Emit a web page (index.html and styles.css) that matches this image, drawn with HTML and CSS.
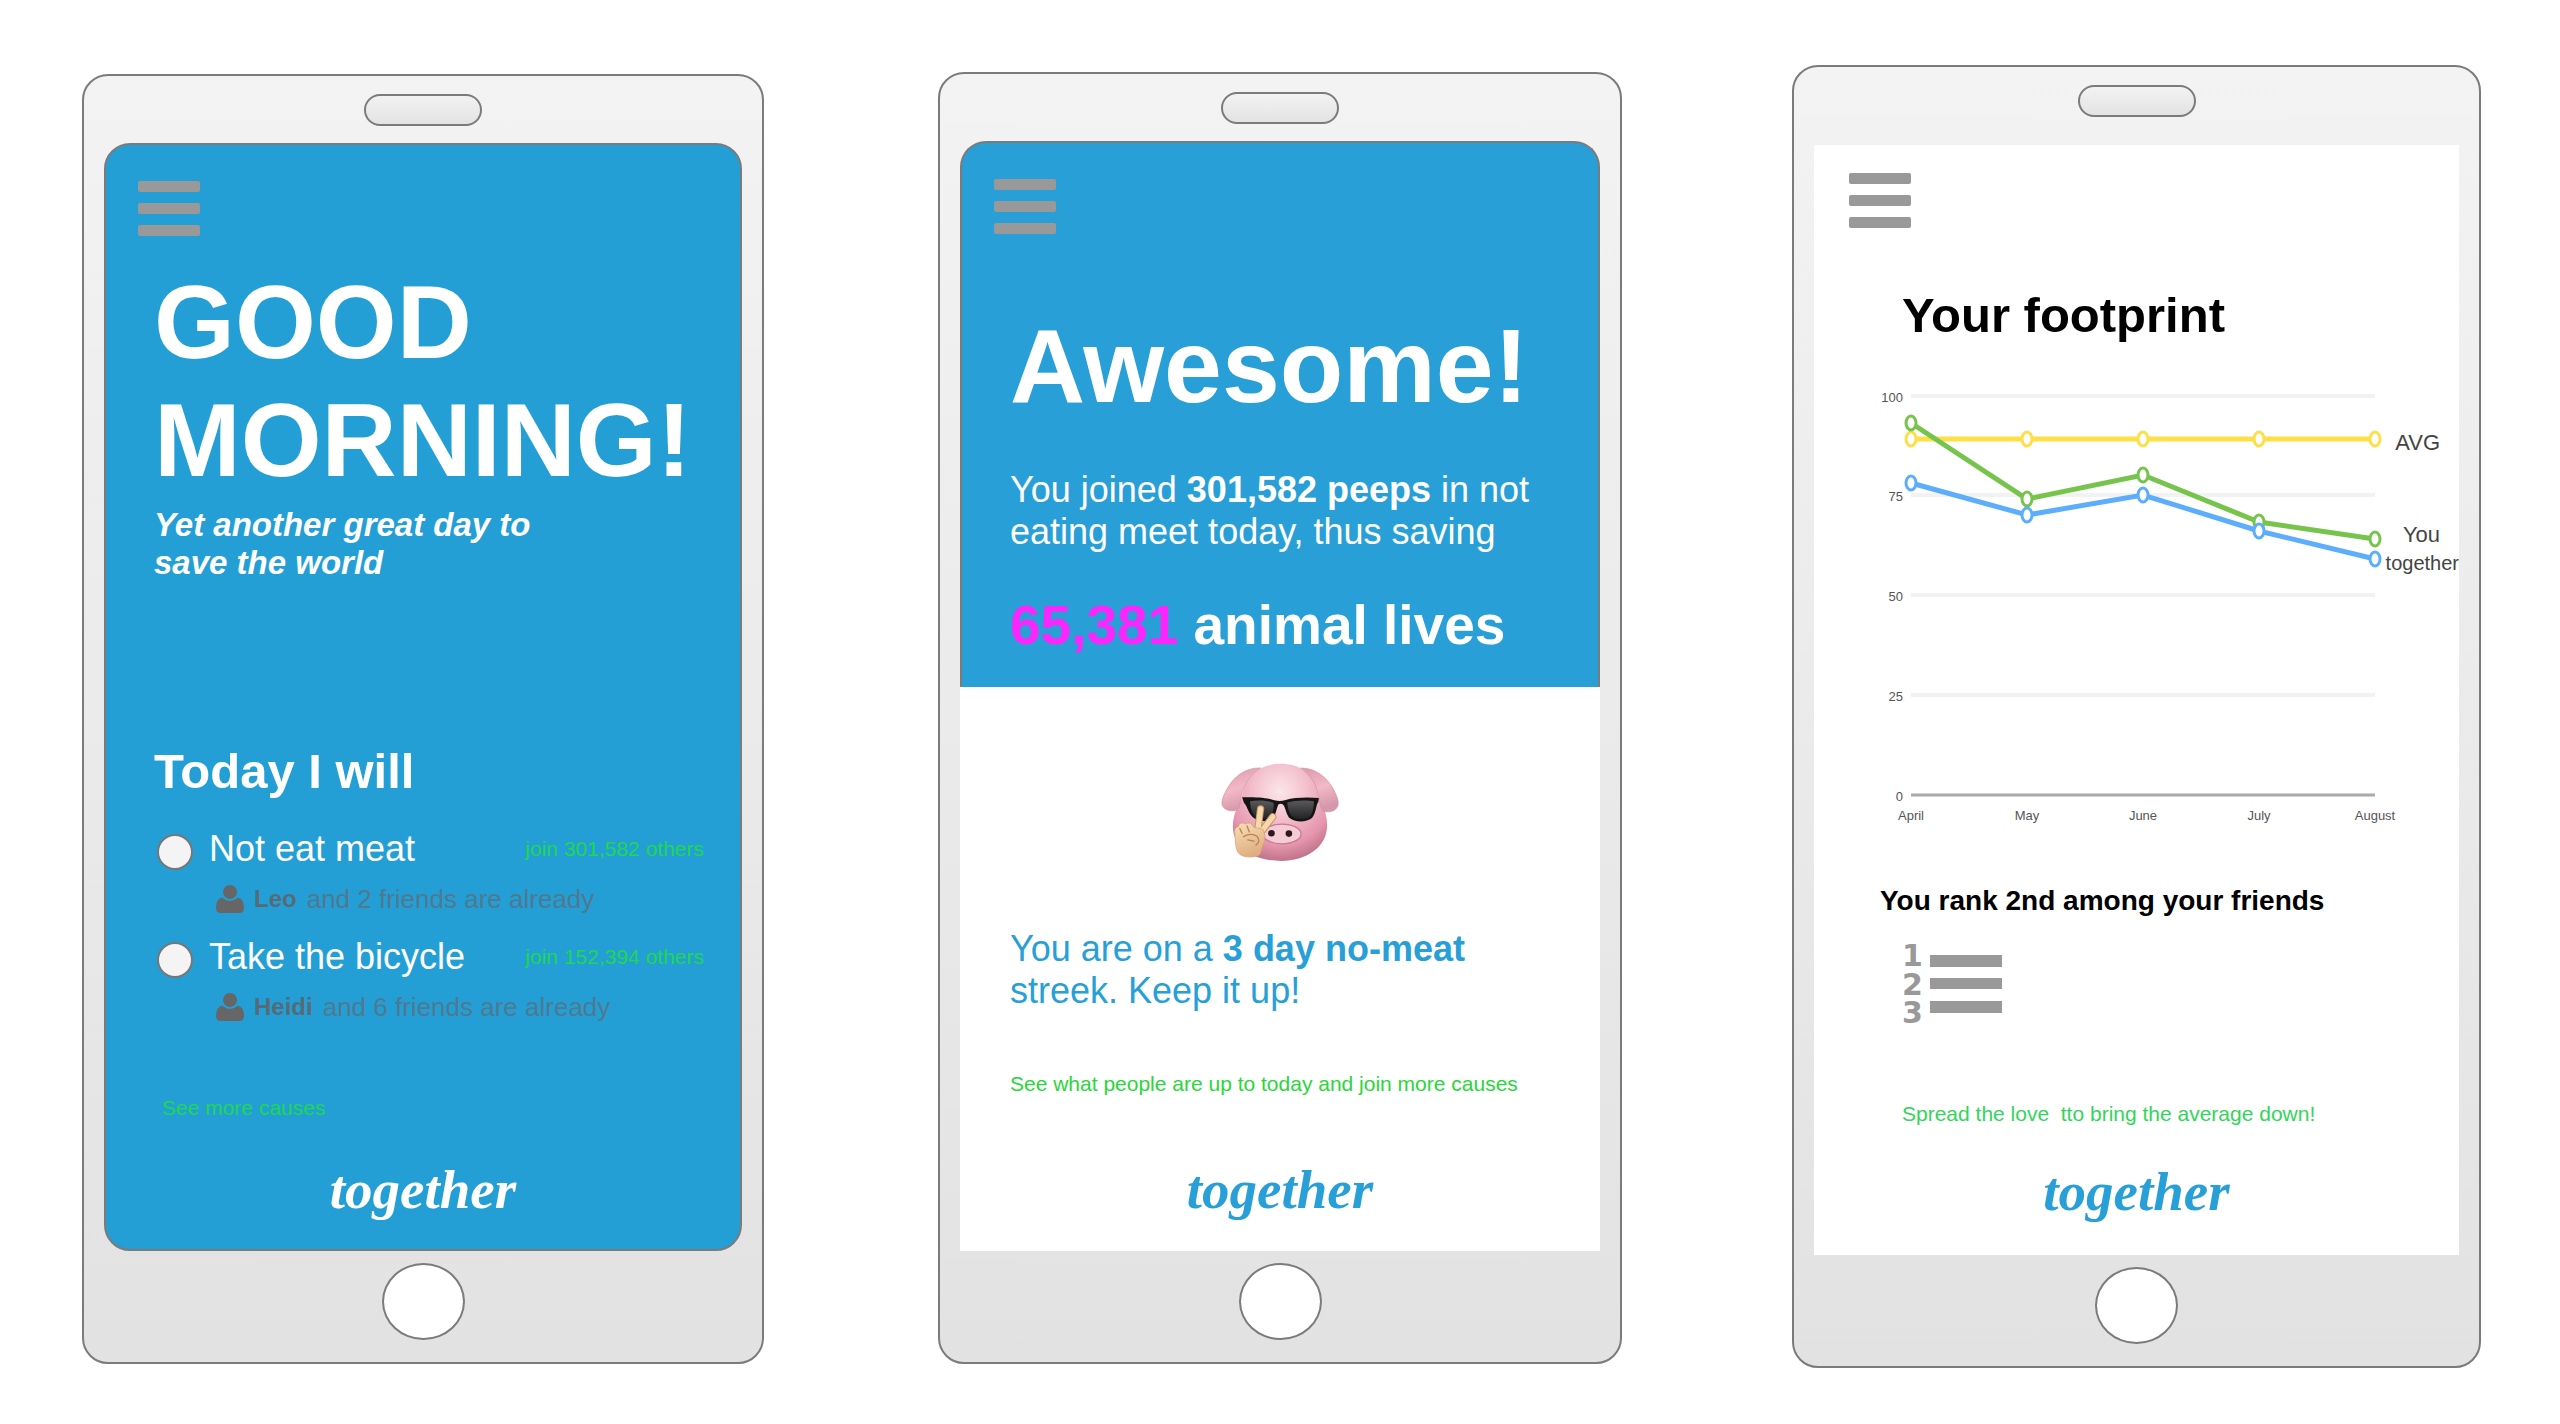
FILE: index.html
```html
<!DOCTYPE html>
<html lang="en">
<head>
<meta charset="utf-8">
<meta name="viewport" content="width=device-width, initial-scale=1">
<title>together</title>
<link rel="stylesheet" href="styles.css">
</head>
<body>
<main class="board">

  <section class="phone phone-morning">
    <div class="speaker"></div>
    <div class="screen screen-blue">
      <button class="menu" type="button" aria-label="Menu"><span></span><span></span><span></span></button>
      <h1 class="hero">GOOD MORNING!</h1>
      <p class="tagline">Yet another great day to save the world</p>
      <h2 class="title">Today I will</h2>
      <ul class="causes">
        <li>
          <div class="cause">
            <input class="radio" type="radio" name="cause" id="meat">
            <label for="meat">Not eat meat</label>
            <a class="link" href="#meat">join 301,582 others</a>
          </div>
          <p class="friends">
            <svg class="person" viewBox="0 0 28 28" aria-hidden="true"><circle cx="14" cy="7" r="7"/><path d="M6 12.500Q10 16 14 16T22 12.500Q28 14 28 23Q28 28 23 28H5Q0 28 0 23Q0 14 6 12.500Z"/></svg>
            <strong>Leo</strong><span>and 2 friends are already</span>
          </p>
        </li>
        <li>
          <div class="cause">
            <input class="radio" type="radio" name="cause" id="bicycle">
            <label for="bicycle">Take the bicycle</label>
            <a class="link" href="#bicycle">join 152,394 others</a>
          </div>
          <p class="friends">
            <svg class="person" viewBox="0 0 28 28" aria-hidden="true"><circle cx="14" cy="7" r="7"/><path d="M6 12.500Q10 16 14 16T22 12.500Q28 14 28 23Q28 28 23 28H5Q0 28 0 23Q0 14 6 12.500Z"/></svg>
            <strong>Heidi</strong><span>and 6 friends are already</span>
          </p>
        </li>
      </ul>
      <a class="link more" href="#causes">See more causes</a>
      <p class="logo">together</p>
    </div>
    <button class="home" type="button" aria-label="Home"></button>
  </section>

  <section class="phone phone-awesome">
    <div class="speaker"></div>
    <div class="screen">
      <div class="panel">
        <button class="menu" type="button" aria-label="Menu"><span></span><span></span><span></span></button>
        <h1 class="hero">Awesome!</h1>
        <p class="copy">You joined <strong>301,582 peeps</strong> in not<br>eating meet today, thus saving</p>
        <p class="lives"><span class="count">65,381</span> animal lives</p>
      </div>
      <div class="result">
        <svg class="pig" viewBox="62 70 358 298" role="img" aria-label="Pig with sunglasses">
          <defs>
            <radialGradient id="face" cx="0.5" cy="0.28" r="0.75">
              <stop offset="0" stop-color="#fbe6ea"/><stop offset="0.35" stop-color="#f4c3d0"/><stop offset="0.75" stop-color="#e595ad"/><stop offset="1" stop-color="#b96d86"/>
            </radialGradient>
            <linearGradient id="ear" x1="0" y1="0" x2="0.3" y2="1">
              <stop offset="0" stop-color="#dc98ac"/><stop offset="0.55" stop-color="#f2b9c8"/><stop offset="1" stop-color="#d598aa"/>
            </linearGradient>
            <linearGradient id="lens" x1="0" y1="0" x2="0" y2="1">
              <stop offset="0" stop-color="#59595b"/><stop offset="1" stop-color="#222224"/>
            </linearGradient>
            <linearGradient id="hand" x1="0" y1="0" x2="0.4" y2="1">
              <stop offset="0" stop-color="#f8e0b5"/><stop offset="1" stop-color="#dfae80"/>
            </linearGradient>
          </defs>
          <path fill="url(#face)" d="M242 71C300 71 345 100 356 155C360 185 384 210 384 258C384 325 320 366 244 366C165 366 98 325 98 262C98 215 122 190 128 160C138 105 184 71 242 71Z"/>
          <path fill="url(#ear)" stroke="#d08fa3" stroke-width="2" d="M182 84C135 82 100 112 82 145C70 166 62 184 66 198C74 214 94 216 107 212C123 207 117 190 124 168C132 132 150 105 182 84Z"/>
          <path fill="url(#ear)" stroke="#d08fa3" stroke-width="2" d="M304 84C350 84 382 112 401 145C412 166 420 182 417 198C410 216 392 219 375 216C362 211 364 190 358 166C350 130 332 104 304 84Z"/>
          <path fill="#151516" d="M126 173C165 171 205 174 224 182Q242 186 258 181C285 173 325 172 359 175L357 187C350 196 351 220 338 236C320 250 286 250 268 234C258 220 257 200 249 194Q242 190 236 195C230 208 229 226 218 238C200 250 170 246 157 232C143 216 142 200 132 190Z"/>
          <path fill="url(#lens)" d="M150 185C175 181 205 183 222 190C223 210 218 226 208 234C190 242 170 238 161 226C153 214 151 198 150 185ZM263 189C285 182 320 181 344 185C343 210 339 224 330 233C315 242 290 241 277 230C267 218 264 203 263 189Z"/>
          <ellipse cx="247" cy="284" rx="58" ry="30" fill="#f5cbd6" stroke="#c77991" stroke-width="4"/>
          <circle cx="215" cy="282" r="10" fill="#2b1820"/><circle cx="268" cy="283" r="10" fill="#2b1820"/>
          <path fill="none" stroke="#c79468" stroke-width="22" stroke-linecap="round" d="M174 270L182 208M184 278L219 232"/>
          <path fill="none" stroke="#f6d9ab" stroke-width="16" stroke-linecap="round" d="M174 270L182 208M184 278L219 232"/>
          <path fill="url(#hand)" stroke="#cf9d70" stroke-width="2" d="M104 285C102 270 105 264 115 262C116 251 127 248 137 254C146 246 158 255 162 264L189 270C197 285 197 306 189 318C183 335 185 348 170 352C150 357 126 353 117 344C105 333 106 305 104 285Z"/>
          <path fill="none" stroke="#b98258" stroke-width="4" stroke-linecap="round" d="M119 268L126 282M141 260L148 278M130 292Q154 279 171 291Q184 306 168 318M143 302L162 306"/>
        </svg>
        <p class="copy">You are on a <strong>3 day no-meat</strong><br>streek. Keep it up!</p>
        <a class="link more" href="#people">See what people are up to today and join more causes</a>
        <p class="logo">together</p>
      </div>
    </div>
    <button class="home" type="button" aria-label="Home"></button>
  </section>

  <section class="phone phone-footprint">
    <div class="speaker"></div>
    <div class="screen">
      <button class="menu" type="button" aria-label="Menu"><span></span><span></span><span></span></button>
      <h2 class="title">Your footprint</h2>
      <svg class="chart" viewBox="0 0 645 450" role="img" aria-label="Footprint from April to August">
        <path class="grid" d="M97 16H561M97 115H561M97 215H561M97 315H561"/>
        <path class="axis" d="M97 415H561"/>
        <g class="ticks ticks-y">
          <text x="89" y="22">100</text><text x="89" y="121">75</text><text x="89" y="221">50</text><text x="89" y="321">25</text><text x="89" y="421">0</text>
        </g>
        <g class="ticks ticks-x">
          <text x="97" y="440">April</text><text x="213" y="440">May</text><text x="329" y="440">June</text><text x="445" y="440">July</text><text x="561" y="440">August</text>
        </g>
        <g class="series avg">
          <polyline points="97,59 213,59 329,59 445,59 561,59"/>
          <ellipse cx="97" cy="59" rx="5" ry="7"/><ellipse cx="213" cy="59" rx="5" ry="7"/><ellipse cx="329" cy="59" rx="5" ry="7"/><ellipse cx="445" cy="59" rx="5" ry="7"/><ellipse cx="561" cy="59" rx="5" ry="7"/>
        </g>
        <g class="series you">
          <polyline points="97,43 213,119 329,95 445,142 561,159"/>
          <ellipse cx="97" cy="43" rx="5" ry="7"/><ellipse cx="213" cy="119" rx="5" ry="7"/><ellipse cx="329" cy="95" rx="5" ry="7"/><ellipse cx="445" cy="142" rx="5" ry="7"/><ellipse cx="561" cy="159" rx="5" ry="7"/>
        </g>
        <g class="series all">
          <polyline points="97,103 213,135 329,115 445,151 561,179"/>
          <ellipse cx="97" cy="103" rx="5" ry="7"/><ellipse cx="213" cy="135" rx="5" ry="7"/><ellipse cx="329" cy="115" rx="5" ry="7"/><ellipse cx="445" cy="151" rx="5" ry="7"/><ellipse cx="561" cy="179" rx="5" ry="7"/>
        </g>
        <g class="names">
          <text class="short" x="626" y="70">AVG</text><text class="short" x="626" y="162">You</text><text x="645" y="190">together</text>
        </g>
      </svg>
      <h3 class="rank">You rank 2nd among your friends</h3>
      <svg class="ranking" viewBox="0 0 100 80" aria-hidden="true">
        <text x="0" y="22">1</text><text x="0" y="51">2</text><text x="0" y="79">3</text>
        <path d="M28 11H100V23H28ZM28 34H100V45H28ZM28 57H100V69H28Z"/>
      </svg>
      <a class="link more" href="#share">Spread the love &nbsp;tto bring the average down!</a>
      <p class="logo">together</p>
    </div>
    <button class="home" type="button" aria-label="Home"></button>
  </section>

</main>
</body>
</html>
```
FILE: styles.css
```css
* {
  box-sizing: border-box;
}

body {
  margin: 0;
  background: #fff;
  font-family: "Liberation Sans", Arial, sans-serif;
}

h1, h2, h3, p, ul {
  margin: 0;
  padding: 0;
}

.board {
  display: grid;
  grid-template-columns: 682fr 684fr 689fr;
  column-gap: 172px;
  align-items: start;
  padding: 65px 79px 56px 82px;
}

/* Phone body */
.phone {
  display: flex;
  flex-direction: column;
  padding: 18px 20px 22px;
  border: 2px solid #7b7b7b;
  border-radius: 26px;
  background: linear-gradient(#f3f3f3, #e2e2e2);
}

.phone-morning {
  margin-top: 9px;
}

.phone-awesome {
  margin: 7px -2px 0 2px;
}

.speaker {
  align-self: center;
  width: 118px;
  height: 32px;
  margin-bottom: 17px;
  border: 2px solid #7b7b7b;
  border-radius: 16px;
  background: linear-gradient(#f2f2f2, #e3e3e3);
}

.phone-footprint .speaker {
  margin-bottom: 28px;
}

.home {
  align-self: center;
  width: 83px;
  height: 77px;
  margin-top: 12px;
  padding: 0;
  border: 2px solid #7b7b7b;
  border-radius: 50%;
  background: #fff;
}

/* Screens */
.screen {
  display: flex;
  flex-direction: column;
  background: #fff;
  color: #000;
}

.screen-blue {
  padding: 36px 48px 27px;
  border: 2px solid #7b7b7b;
  border-radius: 26px;
  background: #239fd6;
  color: #fff;
}

.phone-awesome .screen {
  background: none;
}

.panel {
  padding: 36px 48px 30px;
  border: 2px solid #7b7b7b;
  border-bottom: 0;
  border-radius: 26px 26px 0 0;
  background: #289fd7;
  color: #fff;
}

.result {
  display: flex;
  flex-direction: column;
  padding: 76px 50px 29px;
  background: #fff;
  color: #289fd7;
}

.phone-footprint .screen {
  padding: 28px 0 31px;
}

.menu {
  display: flex;
  flex-direction: column;
  gap: 11px;
  width: 62px;
  margin-left: -16px;
  padding: 0;
  border: 0;
  background: none;
}

.menu span {
  width: 100%;
  height: 11px;
  border-radius: 2px;
  background: #999;
}

.phone-footprint .menu {
  margin-left: 35px;
}

/* Text */
.hero {
  margin-top: 27px;
  font-size: 104px;
  line-height: 118px;
}

.panel .hero {
  margin-top: 73px;
}

.tagline {
  max-width: 400px;
  margin-top: 7px;
  font-size: 33px;
  font-weight: bold;
  font-style: italic;
  line-height: 38px;
}

.title {
  margin-top: 161px;
  font-size: 49px;
  line-height: 56px;
}

.phone-footprint .title {
  margin: 59px 0 0 88px;
}

.copy {
  margin-top: 44px;
  font-size: 36px;
  line-height: 42px;
}

.result .copy {
  margin-top: 66px;
}

.lives {
  margin-top: 40px;
  font-size: 55px;
  font-weight: bold;
  line-height: 64px;
}

.count {
  color: #fb26fb;
}

.link {
  color: #1fd84f;
  font-size: 21px;
  line-height: 24px;
  text-decoration: none;
  white-space: nowrap;
}

.more {
  margin-top: 74px;
  margin-left: 8px;
}

.result .more {
  margin-top: 60px;
  margin-left: 0;
  color: #2ad63a;
}

.phone-footprint .more {
  margin-top: 78px;
  margin-left: 88px;
  color: #34d45c;
}

.logo {
  margin-top: 38px;
  font-family: "Brush Script MT", "Liberation Serif", serif;
  font-size: 55px;
  font-style: italic;
  font-weight: bold;
  line-height: 64px;
  text-align: center;
}

.result .logo {
  margin-top: 62px;
}

.phone-footprint .logo {
  margin-top: 34px;
  color: #289fd7;
}

/* Causes */
.causes {
  display: flex;
  flex-direction: column;
  gap: 22px;
  margin-top: 29px;
  margin-right: -12px;
  list-style: none;
}

.cause {
  display: flex;
  align-items: center;
  gap: 16px;
  font-size: 36px;
  line-height: 42px;
}

.cause .link {
  margin-left: auto;
}

.radio {
  align-self: flex-end;
  appearance: none;
  width: 36px;
  height: 36px;
  margin: 0 0 0 3px;
  border: 2px solid #777;
  border-radius: 50%;
  background: #f4f4f4;
}

.radio:checked {
  background: #666;
}

.friends {
  display: flex;
  align-items: center;
  gap: 10px;
  margin-top: 14px;
  margin-left: 62px;
  color: #50798f;
  font-size: 26px;
  line-height: 30px;
}

.friends strong {
  color: #566b78;
  font-size: 24px;
}

.person {
  width: 28px;
  height: 28px;
  fill: #666;
}

.pig {
  align-self: center;
  width: 118px;
  height: 99px;
}

/* Footprint */
.chart {
  display: block;
  width: 100%;
  margin-top: 37px;
}

.grid {
  stroke: #f2f2f2;
  stroke-width: 4;
}

.axis {
  stroke: #aaa;
  stroke-width: 3;
}

.ticks {
  fill: #555;
  font-size: 13px;
}

.ticks-y {
  text-anchor: end;
}

.ticks-x {
  text-anchor: middle;
}

.series {
  fill: #fff;
  stroke-width: 3;
}

.series polyline {
  fill: none;
  stroke-width: 5;
}

.avg {
  stroke: #fde047;
}

.you {
  stroke: #77c44c;
}

.all {
  stroke: #5cadfc;
}

.names {
  fill: #444;
  font-size: 20px;
  text-anchor: end;
}

.names .short {
  font-size: 22px;
}

.rank {
  margin-top: 55px;
  margin-left: 66px;
  font-size: 28px;
  line-height: 32px;
}

.ranking {
  width: 100px;
  height: 80px;
  margin-top: 27px;
  margin-left: 88px;
  overflow: visible;
  fill: #999;
  font-family: "DejaVu Sans", sans-serif;
  font-size: 30px;
  font-weight: bold;
}

@media (max-width: 2300px) {
  .board {
    grid-template-columns: minmax(0, 690px);
    row-gap: 64px;
    justify-content: center;
  }
}
```
